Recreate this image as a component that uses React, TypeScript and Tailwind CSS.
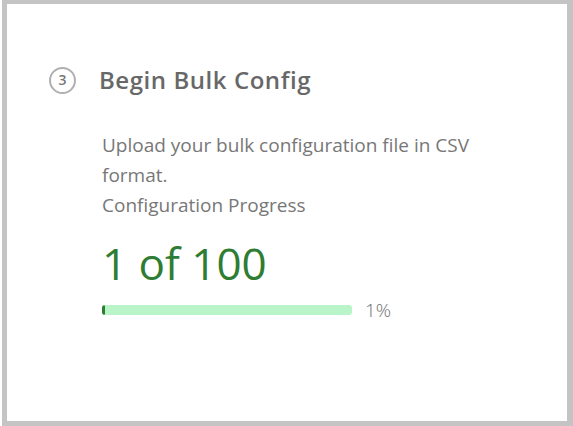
export default function App() {
  return (
    <div className="w-[573px] h-[426px] bg-white pl-[2px]" style={{ fontFamily: '"Open Sans", sans-serif' }}>
      <div className="w-[571px] h-[426px] border-t-4 border-l-[5px] border-r-[6px] border-b-[5px] border-[#c4c4c4] bg-white pt-[58px] pl-[42px]">
        <div className="flex items-center h-[36px]">
          <div className="w-[27px] h-[27px] rounded-full border-[2.5px] border-[#b0b0b0] flex items-center justify-center text-[14px] font-semibold text-[#777] leading-none">
            3
          </div>
          <div className="ml-[23px] text-[24px] font-semibold text-[#686868] leading-[36px] tracking-[0.55px]">Begin Bulk Config</div>
        </div>
        <div className="pl-[53px] mt-[32px] w-[460px] text-[19px] leading-[30px] text-[#777]">
          <p>Upload your bulk configuration file in CSV format.</p>
          <p>Configuration Progress</p>
          <div className="mt-[15px] text-[44px] leading-[56px] text-[#2e7d32]">1 of 100</div>
          <div className="flex items-center mt-[9px] h-[20px]">
            <div className="w-[250px] h-[10px] rounded-[3px] bg-[#b9f5c9] overflow-hidden shrink-0">
              <div className="h-full rounded-[3px] bg-[#2e7d32]" style={{ width: "1%" }} />
            </div>
            <span className="ml-[13px] text-[19px] font-light leading-[20px] text-[#6f6f6f]">1%</span>
          </div>
        </div>
      </div>
    </div>
  );
}
